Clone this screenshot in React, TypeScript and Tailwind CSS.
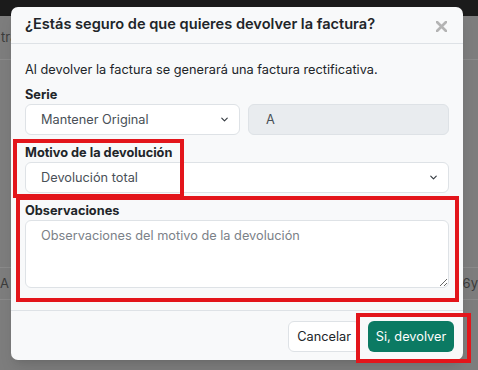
import React from "react";
import { ChevronDown } from "lucide-react";

const Field: React.FC<{ label: string; children: React.ReactNode; className?: string }> = ({
  label,
  children,
  className,
}) => (
  <div className={className}>
    <label className="block text-[12.75px] leading-[18px] font-bold text-[#212529]">{label}</label>
    {children}
  </div>
);

const FakeSelect: React.FC<{ value: string; className?: string }> = ({ value, className }) => (
  <div
    className={`flex h-[31px] items-center justify-between rounded-[6px] border border-[#dee2e6] bg-white pl-[15px] pr-[9px] text-[12.75px] text-[#495057] ${className ?? ""}`}>
    <span>{value}</span>
    <ChevronDown size={11} strokeWidth={2.5} className="text-[#343a40]" />
  </div>
);

export default function App() {
  return (
    <div className="relative h-[370px] w-[478px] overflow-hidden bg-[#7d7d7d] font-['Inter',sans-serif]">
      {/* page behind the overlay */}
      <div className="h-4 bg-[#1b1b1b]" />
      <div className="flex h-11 items-center border-b border-[#8a8a8a] text-[13px] text-[#3b3b3b]">
        <span className="pl-[1px]">tra</span>
      </div>
      <div className="h-[208px] border-b border-[#8a8a8a]" />
      <div className="flex h-[32px] items-center justify-between border-b border-[#8a8a8a] text-[13px] text-[#3b3b3b]">
        <span>A r</span>
        <span>36y</span>
      </div>

      {/* modal */}
      <div className="absolute left-[11px] top-[7px] w-[452px] rounded-[7px] bg-[#f8f9fa] shadow-lg">
        <div className="flex h-[37px] items-center justify-between border-b border-[#dee2e6] pl-[14px] pr-[16px]">
          <h5 className="text-[14.6px] font-semibold text-[#212529]">
            ¿Estás seguro de que quieres devolver la factura?
          </h5>
          <svg width="11" height="11" viewBox="0 0 11 11" className="mt-[2px]">
            <path d="M1 1 L10 10 M10 1 L1 10" stroke="#b4b4b4" strokeWidth="2.6" strokeLinecap="round" />
          </svg>
        </div>

        <div className="px-[14px] pb-[22px] pt-[16px]">
          <p className="text-[12.75px] leading-5 text-[#212529]">
            Al devolver la factura se generará una factura rectificativa.
          </p>

          <Field label="Serie" className="mt-[6px]">
            <div className="flex gap-[8px]">
              <FakeSelect value="Mantener Original" className="w-[215px]" />
              <div className="flex h-[31px] flex-1 items-center rounded-[6px] border border-[#dee2e6] bg-[#e9ecef] pl-[17px] text-[12.75px] text-[#495057]">
                A
              </div>
            </div>
          </Field>

          <Field label="Motivo de la devolución" className="mt-[9px]">
            <FakeSelect value="Devolución total" />
          </Field>

          <Field label="Observaciones" className="mt-[9px]">
            <textarea
              className="block h-[68px] w-full rounded-[6px] border border-[#dee2e6] bg-white px-[15px] py-[5px] text-[12.75px] text-[#495057] outline-none placeholder:text-[#7b8188]"
              placeholder="Observaciones del motivo de la devolución"
            />
          </Field>
        </div>

        <div className="flex justify-end gap-[8px] border-t border-[#dee2e6] pb-[8px] pr-[9px] pt-[10px]">
          <button className="h-[31px] rounded-[6px] border border-[#dee2e6] bg-white px-[8px] text-[12.75px] text-[#212529]">
            Cancelar
          </button>
          <button className="h-[31px] w-[86px] rounded-[6px] bg-[#0b7a63] text-[12.75px] text-white">
            Si, devolver
          </button>
        </div>
      </div>

      {/* annotation boxes */}
      <div className="absolute left-[13px] top-[139px] h-[59px] w-[171px] border-[4px] border-[#e3151b]" />
      <div className="absolute left-[16px] top-[196px] h-[106px] w-[443px] border-[4px] border-[#e3151b]" />
      <div className="absolute left-[356px] top-[313px] h-[50px] w-[115px] border-[4px] border-[#e3151b]" />
    </div>
  );
}
